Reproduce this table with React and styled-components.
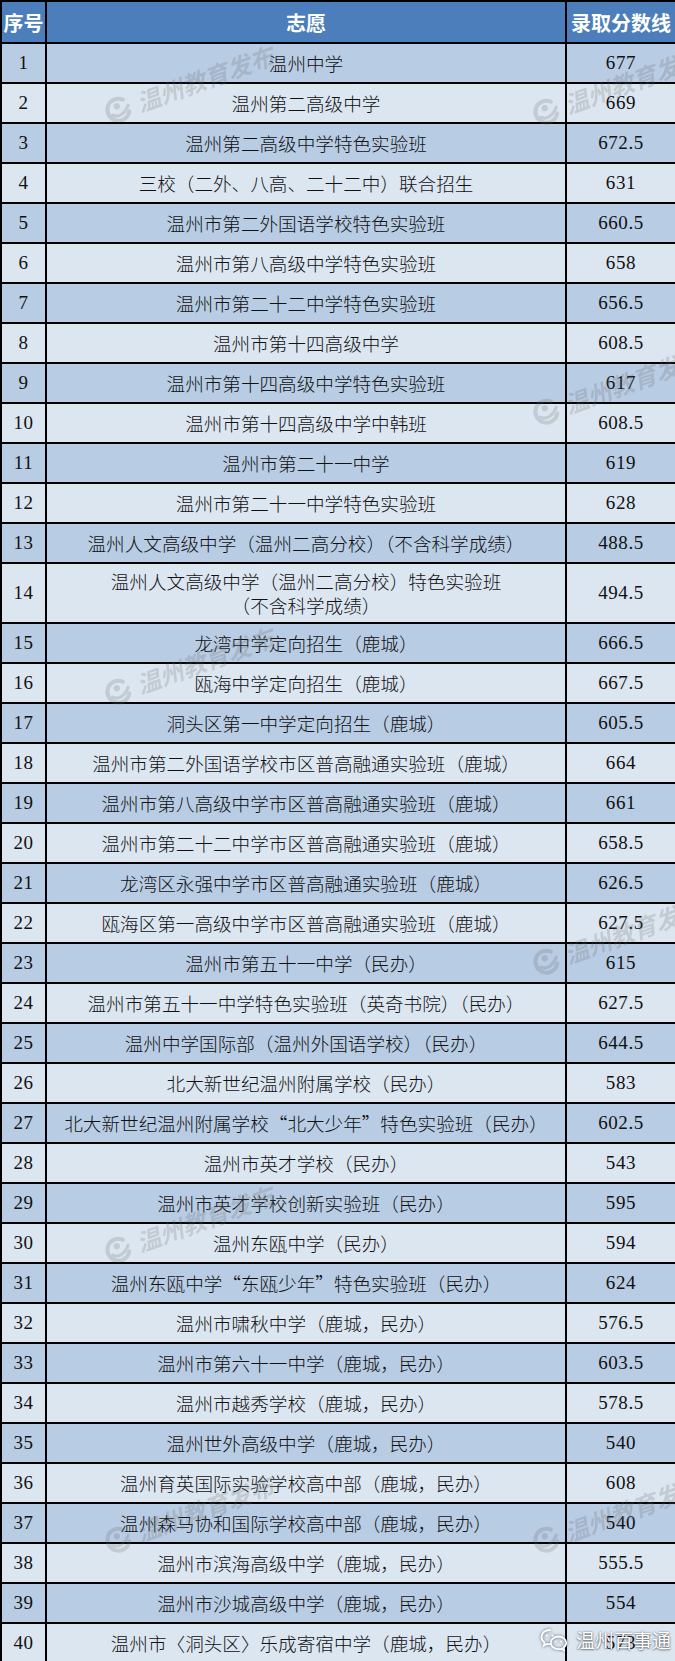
import styled, { createGlobalStyle } from 'styled-components';

const GlobalStyle = createGlobalStyle`
  html, body {
    margin: 0;
    padding: 0;
    background: #ffffff;
  }
`;

const Sheet = styled.div`
  position: relative;
  width: 675px;
  overflow: hidden;
`;

const Table = styled.table`
  width: 675px;
  table-layout: fixed;
  border-collapse: collapse;
  border: 2px solid #000;
`;

const HeadCell = styled.th`
  height: 40px;
  padding: 0;
  background: #4b7ebb;
  color: #ffffff;
  border: 2px solid #000;
  font-family: "Noto Sans CJK SC", sans-serif;
  font-size: 20px;
  font-weight: 700;
  text-align: center;
  white-space: nowrap;
  overflow: hidden;
`;

const Row = styled.tr`
  height: ${p => (p.$tall ? 60 : 40)}px;
  background: ${p => (p.$dark ? '#b8cce4' : '#dce6f1')};
`;

const NumCell = styled.td`
  padding: 0;
  border: 2px solid #000;
  color: #111;
  font-family: "Liberation Serif", "DejaVu Serif", serif;
  font-size: 19px;
  letter-spacing: 0.6px;
  text-align: center;
`;

const NameCell = styled.td`
  padding: 0;
  border: 2px solid #000;
  color: #111;
  font-family: "Noto Sans CJK SC", sans-serif;
  font-weight: 300;
  font-size: 18.6px;
  line-height: 24px;
  text-align: center;
  white-space: nowrap;
`;

const Mark = styled.div`
  position: absolute;
  left: ${p => p.$x}px;
  top: ${p => p.$y}px;
  display: flex;
  align-items: center;
  gap: 6px;
  transform: rotate(-20deg);
  transform-origin: 14px 50%;
  pointer-events: none;
  opacity: 0.22;
  color: #6a6a6a;
  font-family: "Noto Sans CJK SC", sans-serif;
  font-size: 24px;
  font-weight: 700;
  font-style: italic;
  white-space: nowrap;
`;

const Stamp = styled.div`
  position: absolute;
  left: 540px;
  top: 1626px;
  display: flex;
  align-items: center;
  gap: 8px;
  pointer-events: none;
  color: #ffffff;
  font-family: "Noto Sans CJK SC", sans-serif;
  font-size: 19px;
  text-shadow: 0 0 2px rgba(0, 0, 0, 0.55), 0 1px 2px rgba(0, 0, 0, 0.4);
`;

const rows = [
  ['1', '温州中学', '677'],
  ['2', '温州第二高级中学', '669'],
  ['3', '温州第二高级中学特色实验班', '672.5'],
  ['4', '三校（二外、八高、二十二中）联合招生', '631'],
  ['5', '温州市第二外国语学校特色实验班', '660.5'],
  ['6', '温州市第八高级中学特色实验班', '658'],
  ['7', '温州市第二十二中学特色实验班', '656.5'],
  ['8', '温州市第十四高级中学', '608.5'],
  ['9', '温州市第十四高级中学特色实验班', '617'],
  ['10', '温州市第十四高级中学中韩班', '608.5'],
  ['11', '温州市第二十一中学', '619'],
  ['12', '温州市第二十一中学特色实验班', '628'],
  ['13', '温州人文高级中学（温州二高分校）（不含科学成绩）', '488.5'],
  ['14', ['温州人文高级中学（温州二高分校）特色实验班', '（不含科学成绩）'], '494.5'],
  ['15', '龙湾中学定向招生（鹿城）', '666.5'],
  ['16', '瓯海中学定向招生（鹿城）', '667.5'],
  ['17', '洞头区第一中学定向招生（鹿城）', '605.5'],
  ['18', '温州市第二外国语学校市区普高融通实验班（鹿城）', '664'],
  ['19', '温州市第八高级中学市区普高融通实验班（鹿城）', '661'],
  ['20', '温州市第二十二中学市区普高融通实验班（鹿城）', '658.5'],
  ['21', '龙湾区永强中学市区普高融通实验班（鹿城）', '626.5'],
  ['22', '瓯海区第一高级中学市区普高融通实验班（鹿城）', '627.5'],
  ['23', '温州市第五十一中学（民办）', '615'],
  ['24', '温州市第五十一中学特色实验班（英奇书院）（民办）', '627.5'],
  ['25', '温州中学国际部（温州外国语学校）（民办）', '644.5'],
  ['26', '北大新世纪温州附属学校（民办）', '583'],
  ['27', '北大新世纪温州附属学校“北大少年”特色实验班（民办）', '602.5'],
  ['28', '温州市英才学校（民办）', '543'],
  ['29', '温州市英才学校创新实验班（民办）', '595'],
  ['30', '温州东瓯中学（民办）', '594'],
  ['31', '温州东瓯中学“东瓯少年”特色实验班（民办）', '624'],
  ['32', '温州市啸秋中学（鹿城，民办）', '576.5'],
  ['33', '温州市第六十一中学（鹿城，民办）', '603.5'],
  ['34', '温州市越秀学校（鹿城，民办）', '578.5'],
  ['35', '温州世外高级中学（鹿城，民办）', '540'],
  ['36', '温州育英国际实验学校高中部（鹿城，民办）', '608'],
  ['37', '温州森马协和国际学校高中部（鹿城，民办）', '540'],
  ['38', '温州市滨海高级中学（鹿城，民办）', '555.5'],
  ['39', '温州市沙城高级中学（鹿城，民办）', '554'],
  ['40', '温州市〈洞头区〉乐成寄宿中学（鹿城，民办）', '573'],
];

const marks = [
  [104, 92], [532, 94],
  [532, 394],
  [104, 674],
  [532, 944],
  [104, 1232],
  [104, 1522], [532, 1522],
];

function Logo() {
  return (
    <svg width="28" height="28" viewBox="0 0 28 28" fill="none">
      <path d="M22 6 A11 11 0 1 0 24 19" stroke="currentColor" strokeWidth="4" strokeLinecap="round" />
      <circle cx="14" cy="10" r="3.2" fill="currentColor" />
      <path d="M7 17 C11 21 18 21 25 13" stroke="currentColor" strokeWidth="3.2" strokeLinecap="round" />
    </svg>
  );
}

function WeChat() {
  return (
    <svg width="28" height="26" viewBox="0 0 28 26" fill="none" style={{ filter: 'drop-shadow(0 0 1.5px rgba(0,0,0,0.6))' }}>
      <path d="M10 3 C4.5 3 1.5 6.5 1.5 10 C1.5 12.5 2.8 14.3 4.6 15.6 L3.8 18.6 L7.2 16.9 C8.1 17.1 9 17.2 10 17.2" stroke="#fff" strokeWidth="1.8" strokeLinecap="round" />
      <path d="M18.5 9.5 C22.8 9.5 26.2 12.3 26.2 15.8 C26.2 17.8 25.1 19.5 23.4 20.6 L24 23.2 L21.2 21.8 C20.3 22 19.4 22.1 18.5 22.1 C14.2 22.1 10.8 19.3 10.8 15.8 C10.8 12.3 14.2 9.5 18.5 9.5 Z" stroke="#fff" strokeWidth="1.8" />
      <circle cx="6.8" cy="8.6" r="1.2" fill="#fff" />
      <circle cx="12.6" cy="8.6" r="1.2" fill="#fff" />
      <circle cx="15.8" cy="14.6" r="1" fill="#fff" />
      <circle cx="21.2" cy="14.6" r="1" fill="#fff" />
    </svg>
  );
}

export default function App() {
  return (
    <>
      <GlobalStyle />
      <Sheet>
        <Table>
          <colgroup>
            <col style={{ width: 45 }} />
            <col style={{ width: 520 }} />
            <col style={{ width: 110 }} />
          </colgroup>
          <thead>
            <tr>
              <HeadCell>序号</HeadCell>
              <HeadCell>志愿</HeadCell>
              <HeadCell>录取分数线</HeadCell>
            </tr>
          </thead>
          <tbody>
            {rows.map(([no, name, score], i) => (
              <Row key={no} $dark={i % 2 === 0} $tall={Array.isArray(name)}>
                <NumCell>{no}</NumCell>
                <NameCell>
                  {Array.isArray(name)
                    ? name.map(line => <div key={line}>{line}</div>)
                    : name}
                </NameCell>
                <NumCell>{score}</NumCell>
              </Row>
            ))}
          </tbody>
        </Table>
        {marks.map(([x, y]) => (
          <Mark key={`${x}-${y}`} $x={x} $y={y}>
            <Logo />
            <span>温州教育发布</span>
          </Mark>
        ))}
        <Stamp>
          <WeChat />
          <span>温州百事通</span>
        </Stamp>
      </Sheet>
    </>
  );
}
